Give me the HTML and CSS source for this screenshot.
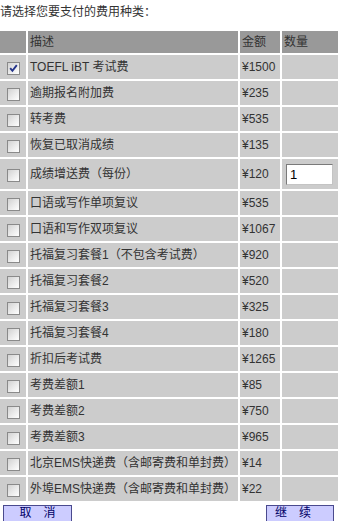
FILE: index.html
```html
<!DOCTYPE html>
<html lang="zh-CN">
<head>
<meta charset="utf-8">
<title>费用种类</title>
<link rel="stylesheet" href="styles.css">
</head>
<body>
<div class="title">请选择您要支付的费用种类：</div>
<table class="fees">
  <thead>
    <tr>
      <th class="c-check"></th>
      <th class="c-desc">描述</th>
      <th class="c-amt">金额</th>
      <th class="c-qty">数量</th>
    </tr>
  </thead>
  <tbody>
    <tr><td class="chk"><span class="cb checked"><svg width="11" height="11" viewBox="0 0 11 11"><path d="M2.2 5.2 L4.4 7.8 L8.8 2.2" fill="none" stroke="#24348a" stroke-width="1.9"/></svg></span></td><td>TOEFL iBT 考试费</td><td>¥1500</td><td></td></tr>
    <tr><td class="chk"><span class="cb"></span></td><td>逾期报名附加费</td><td>¥235</td><td></td></tr>
    <tr><td class="chk"><span class="cb"></span></td><td>转考费</td><td>¥535</td><td></td></tr>
    <tr><td class="chk"><span class="cb"></span></td><td>恢复已取消成绩</td><td>¥135</td><td></td></tr>
    <tr class="tall"><td class="chk"><span class="cb"></span></td><td>成绩增送费（每份）</td><td>¥120</td><td class="qty"><input class="qty-input" type="text" value="1"></td></tr>
    <tr><td class="chk"><span class="cb"></span></td><td>口语或写作单项复议</td><td>¥535</td><td></td></tr>
    <tr><td class="chk"><span class="cb"></span></td><td>口语和写作双项复议</td><td>¥1067</td><td></td></tr>
    <tr><td class="chk"><span class="cb"></span></td><td>托福复习套餐1（不包含考试费）</td><td>¥920</td><td></td></tr>
    <tr><td class="chk"><span class="cb"></span></td><td>托福复习套餐2</td><td>¥520</td><td></td></tr>
    <tr><td class="chk"><span class="cb"></span></td><td>托福复习套餐3</td><td>¥325</td><td></td></tr>
    <tr><td class="chk"><span class="cb"></span></td><td>托福复习套餐4</td><td>¥180</td><td></td></tr>
    <tr><td class="chk"><span class="cb"></span></td><td>折扣后考试费</td><td>¥1265</td><td></td></tr>
    <tr><td class="chk"><span class="cb"></span></td><td>考费差额1</td><td>¥85</td><td></td></tr>
    <tr><td class="chk"><span class="cb"></span></td><td>考费差额2</td><td>¥750</td><td></td></tr>
    <tr><td class="chk"><span class="cb"></span></td><td>考费差额3</td><td>¥965</td><td></td></tr>
    <tr><td class="chk"><span class="cb"></span></td><td>北京EMS快递费（含邮寄费和单封费）</td><td>¥14</td><td></td></tr>
    <tr><td class="chk"><span class="cb"></span></td><td>外埠EMS快递费（含邮寄费和单封费）</td><td>¥22</td><td></td></tr>
  </tbody>
</table>
<div class="actions">
  <button class="btn" type="button">取　消</button>
  <button class="btn btn-next" type="button">继　续</button>
</div>
</body>
</html>
```

FILE: styles.css
```css
html, body {
  margin: 0;
  padding: 0;
  background: #ffffff;
  overflow: hidden;
}

body {
  font-family: "Liberation Sans", "Noto Sans CJK SC", sans-serif;
  font-size: 12px;
  color: #333333;
}

.title {
  height: 29px;
  line-height: 24px;
  color: #333333;
  white-space: nowrap;
}

.fees {
  margin-left: -2px;
  width: 342px;
  table-layout: fixed;
  border-collapse: separate;
  border-spacing: 2px;
}

.fees th,
.fees td {
  box-sizing: border-box;
  padding: 0 0 0 2px;
  font-size: 12px;
  line-height: 16px;
  color: #333333;
  text-align: left;
  vertical-align: middle;
  white-space: nowrap;
  overflow: hidden;
}

.fees th {
  background: #999999;
  font-weight: normal;
}

.fees td {
  background: #cccccc;
}

.fees thead tr {
  height: 22px;
}

.fees tbody tr {
  height: 24px;
}

.fees tbody tr.tall {
  height: 30px;
}

.c-check { width: 26px; }
.c-desc { width: 210px; }
.c-amt { width: 40px; }
.c-qty { width: 56px; }

.fees td.chk {
  padding: 0;
  text-align: center;
}

.cb {
  display: inline-block;
  box-sizing: border-box;
  width: 13px;
  height: 13px;
  margin-top: 1px;
  border: 1px solid #8a8a8a;
  background: linear-gradient(135deg, #d2d2d2 0%, #ececec 55%, #ffffff 100%);
  vertical-align: middle;
}

.cb svg {
  display: block;
}

.fees td.qty {
  padding-left: 4px;
  padding-top: 1px;
}

.qty-input {
  display: block;
  box-sizing: border-box;
  width: 47px;
  height: 21px;
  margin: 0;
  padding: 0 3px;
  border: 1px solid;
  border-color: #7a7a7a #c4c4c4 #c4c4c4 #7a7a7a;
  background: #ffffff;
  font-family: "Liberation Sans", "Noto Sans CJK SC", sans-serif;
  font-size: 13px;
  color: #000000;
}

.actions {
  display: flex;
  justify-content: space-between;
  padding: 2px 5px 0 3px;
}

.btn {
  box-sizing: border-box;
  width: 69px;
  height: 20px;
  margin: 0;
  padding: 0 0 4px 0;
  border: 1px solid #4a4a8e;
  background: #ccccff;
  color: #000066;
  font-family: "Liberation Sans", "Noto Sans CJK SC", sans-serif;
  font-size: 12px;
  line-height: 14px;
  text-align: center;
  white-space: nowrap;
}

.btn-next {
  width: 68px;
  padding-right: 14px;
}
```
